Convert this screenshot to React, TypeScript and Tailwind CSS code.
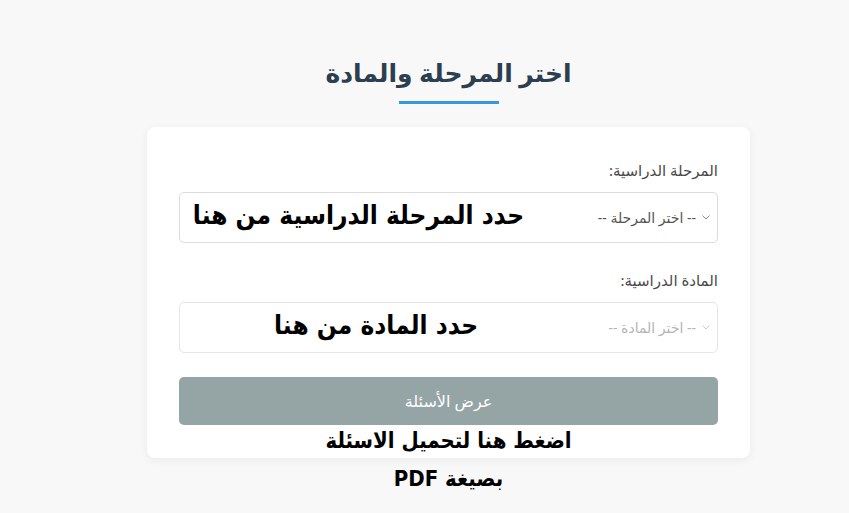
import { useState } from "react"

const ui = { fontFamily: '"Noto Sans", "DejaVu Sans", sans-serif' }
const note = { fontFamily: '"DejaVu Sans Condensed", "DejaVu Sans", sans-serif' }

function Chevron({ color }: { color: string }) {
  return (
    <svg width="8" height="5" viewBox="0 0 8 5" fill="none" stroke={color} strokeWidth="1">
      <path d="M0.5 0.5 L4 4 L7.5 0.5" />
    </svg>
  )
}

export default function App() {
  const [stage, setStage] = useState("")

  return (
    <div dir="rtl" className="min-h-[513px] w-[849px] bg-[#f8f8f8] pl-[48px] pt-[52px]" style={ui}>
      <div className="mx-auto w-[603px]">
        <h1 className="text-center text-[25px] font-bold leading-[40px] text-[#2c3e50]">اختر المرحلة والمادة</h1>
        <div className="mx-auto mt-[9px] h-[3px] w-[100px] bg-[#3498db]" />

        <div className="mt-[23px] rounded-lg bg-white px-[32px] pb-[33px] pt-[33px] shadow-[0_2px_10px_rgba(0,0,0,0.06)]">
          <label className="block text-[15px] leading-[20px] text-[#4a4a4a]">المرحلة الدراسية:</label>
          <div className="relative mt-[12px]">
            <div className="flex h-[51px] items-center gap-[6px] rounded-[5px] border border-[#dcdcdc] bg-white px-[7px] text-[14px] text-[#555]">
              <Chevron color="#888" />
              <span>-- اختر المرحلة --</span>
            </div>
            <div className="absolute right-[194px] top-[6px] whitespace-nowrap text-[26px] font-bold leading-[34px] text-black" style={note}>
              حدد المرحلة الدراسية من هنا
            </div>
          </div>

          <label className="mt-[27px] block text-[15px] leading-[20px] text-[#4a4a4a]">المادة الدراسية:</label>
          <div className="relative mt-[12px]">
            <div className="flex h-[51px] items-center gap-[6px] rounded-[5px] border border-[#e6e6e6] bg-white px-[7px] text-[14px] text-[#b5b5b5]">
              <Chevron color="#ccc" />
              <span>-- اختر المادة --</span>
            </div>
            <div className="absolute right-[240px] top-[6px] whitespace-nowrap text-[26px] font-bold leading-[34px] text-black" style={note}>
              حدد المادة من هنا
            </div>
          </div>

          <div className="relative mt-[24px]">
            <button
              type="button"
              onClick={() => setStage(stage)}
              className="h-[48px] w-full rounded-[5px] bg-[#95a5a6] text-[16px] text-white"
            >
              عرض الأسئلة
            </button>
            <div className="absolute left-0 right-0 top-full -mt-[3px] text-center text-[22px] font-bold leading-[38px] text-black" style={note}>
              <div className="whitespace-nowrap">اضغط هنا لتحميل الاسئلة</div>
              <div className="whitespace-nowrap">بصيغة PDF</div>
            </div>
          </div>
        </div>
      </div>
    </div>
  )
}
